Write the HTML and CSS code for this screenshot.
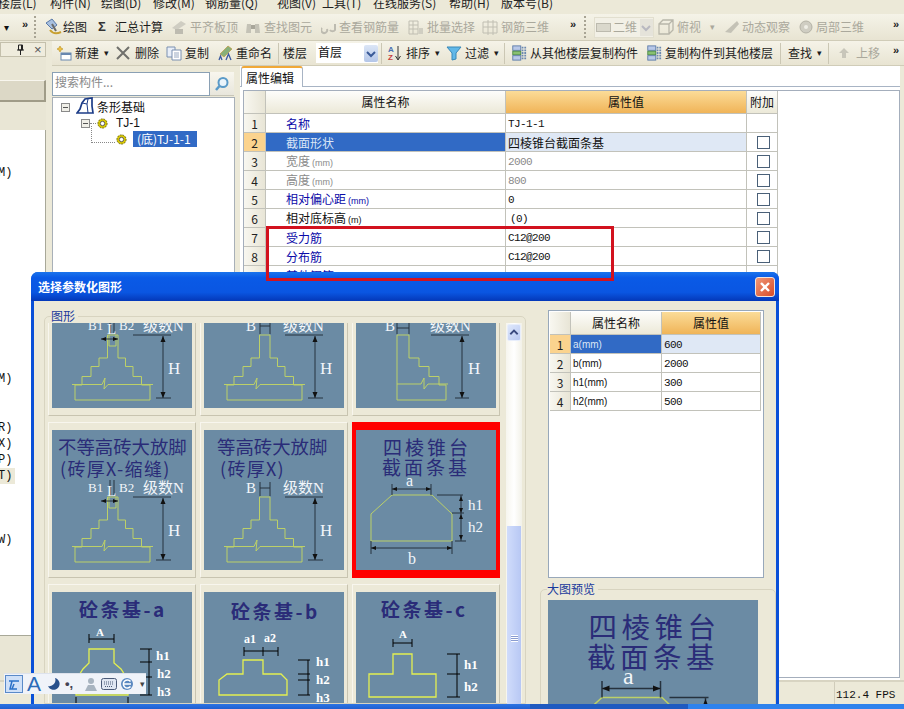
FILE: index.html
```html
<!DOCTYPE html>
<html lang="zh-CN">
<head>
<meta charset="utf-8">
<title>选择参数化图形</title>
<link rel="stylesheet" href="styles.css">
</head>
<body>
<svg class="defs" aria-hidden="true">
  <defs>
    <symbol id="gear" viewBox="0 0 12 12"><circle cx="6" cy="6" r="5" fill="#d8c800" stroke="#6a6200" stroke-dasharray="2 1"/><circle cx="6" cy="6" r="2.4" fill="#fff" stroke="#555"/></symbol>
    <symbol id="copyicon" viewBox="0 0 16 18"><rect x="1" y="1" width="9" height="5" fill="#b8c8e8" stroke="#5a7aa8"/><rect x="1" y="7" width="9" height="4" fill="#88c070" stroke="#4a8a48"/><rect x="1" y="12" width="9" height="5" fill="#b8c8e8" stroke="#5a7aa8"/><path d="M12 2v14M15 2v14" stroke="#6a88b0" stroke-width="2" stroke-dasharray="2 1"/></symbol>
    <symbol id="chev" viewBox="0 0 10 8"><path d="M1 2l4 4 4-4" fill="none" stroke="currentColor" stroke-width="2"/></symbol>
    <g id="steps">
      <path class="yl" d="M55.500 67V90H47V98.500H39V108.500H30V117H23V132H98V117H89.500V108.500H81V98.500H73.500V90H66V67Z"/>
      <path class="yl" d="M20 116.500H50L53 110L52 121L56 116.500H101"/>
    </g>
    <g id="dimH">
      <path class="dk" d="M81 67H119M104 130H119M111 68V130"/>
      <path class="ar" d="M111 68l-2.500 6h5zM111 130l-2.500-6h5z"/>
      <text class="wt" x="116" y="106" font-size="17">H</text>
    </g>
  </defs>
</svg>

<header class="menu">
  <span>楼层(L)</span><span>构件(N)</span><span>绘图(D)</span><span>修改(M)</span><span>钢筋量(Q)</span><span>视图(V)</span><span>工具(T)</span><span>在线服务(S)</span><span>帮助(H)</span><span>版本号(B)</span>
</header>

<div class="bar bar-top">
  <span class="caret">▾</span>
  <span class="more">»</span>
  <span class="grip"></span>
  <span class="tool close"><svg class="ic18" viewBox="0 0 18 18"><path d="M2 5l6-4 5 6-5 4z" fill="#a8c0e0" stroke="#5878a8"/><path d="M6 12c3 4 7 4 11 2" fill="none" stroke="#c8a030" stroke-width="2"/><path d="M8 6l4 7" stroke="#6a6a6a" stroke-width="2"/></svg>绘图</span>
  <span class="tool"><span class="sigma">Σ</span>汇总计算</span>
  <span class="tool off"><svg class="ic16" viewBox="0 0 16 16"><path d="M1 9l9-7 5 3-9 6z" fill="#cfcdc2"/><rect x="4" y="10" width="8" height="5" fill="#bdbbb0"/></svg>平齐板顶</span>
  <span class="tool off"><svg class="ic16" viewBox="0 0 16 16"><path d="M2 5h4v9H1zM10 5h4l1 9h-5z" fill="#c4c2b6"/><rect x="6" y="6" width="4" height="4" fill="#a8a69a"/></svg>查找图元</span>
  <span class="tool off"><svg class="ic16 narrow" viewBox="0 0 16 16"><path d="M1 9a3 3 0 1 0 5 1M9 11a3 3 0 0 0 5 0V5" fill="none" stroke="#bdbbb0" stroke-width="2"/></svg>查看钢筋量</span>
  <span class="tool off"><svg class="ic16" viewBox="0 0 16 16"><path d="M1 2h9v13H1zM1 6h9M1 10h9M5 2v13" fill="none" stroke="#c0beb2"/><path d="M11 9h4v6h-4z" fill="#d0cec2"/></svg>批量选择</span>
  <span class="tool off"><svg class="ic16" viewBox="0 0 16 16"><path d="M1 3h14v11H1zM6 1v15M11 1v15M1 8h14" fill="none" stroke="#c0beb2"/></svg>钢筋三维</span>
  <span class="more">»</span>
  <span class="grip"></span>
  <span class="combo off"><i class="swatch"></i>二维<i class="combo-btn"><svg class="chev"><use href="#chev"/></svg></i></span>
  <span class="tool off"><svg class="ic16" viewBox="0 0 16 16"><path d="M1 5h10v10H1zM1 5l4-4h10v10l-4 4M11 5l4-4" fill="none" stroke="#b8b6aa" stroke-width="1.300"/></svg>俯视<span class="caret-in far">▾</span></span>
  <span class="tool off tight"><svg class="ic16" viewBox="0 0 16 16"><path d="M1 13L13 2l2 3-8 9z" fill="#c4c2b6"/></svg>动态观察</span>
  <span class="tool off tight"><svg class="ic16" viewBox="0 0 16 16"><circle cx="8" cy="8" r="6" fill="#cfcdc2" stroke="#b4b2a6"/><circle cx="8" cy="8" r="2" fill="#efeee6"/></svg>局部三维</span>
  <span class="more">»</span>
</div>

<main class="main">
  <aside class="dock">
    <div class="dock-title"><svg class="pin" viewBox="0 0 9 11"><path d="M2.500 1h4v5h-4zM1 6h7M4.500 6v5M5.500 1v5" fill="none" stroke="#222"/></svg><span class="x">×</span></div>
    <div class="dock-a"></div>
    <div class="dock-b"></div>
    <div class="dock-c"></div>
    <div class="dock-list">
      <div class="li li-1">M)</div>
      <div class="li li-2">M)</div>
      <div class="li li-3">R)</div>
      <div class="li">X)</div>
      <div class="li">P)</div>
      <div class="li li-hl">T)</div>
      <div class="li li-4">W)</div>
    </div>
    <div class="dock-d"></div>
  </aside>

  <section class="work">
    <div class="bar bar-sub">
      <span class="tool"><svg class="ic16" viewBox="0 0 16 16"><path d="M4 1l1 2 2 1-2 1-1 2-1-2-2-1 2-1z" fill="#f0c040" stroke="#b89020" stroke-width=".6"/><rect x="5" y="8" width="10" height="7" fill="#fff" stroke="#6888b0"/><rect x="5" y="8" width="10" height="2" fill="#6888b0"/></svg>新建<span class="caret-in">▾</span></span>
      <span class="tool"><svg class="ic14" viewBox="0 0 14 14"><path d="M1 1l12 12M13 1L1 13" stroke="#70706c" stroke-width="2"/></svg>删除</span>
      <span class="tool"><svg class="ic16" viewBox="0 0 16 16"><path d="M1 2h8v10H1z" fill="#e8eef8" stroke="#7a90b0"/><path d="M6 5h9v10H6z" fill="#fff" stroke="#7a90b0"/><path d="M8 8h5M8 10h5M8 12h5" stroke="#98a8c0"/></svg>复制</span>
      <span class="tool"><svg class="ic16" viewBox="0 0 16 16"><path d="M3 9l8-8 4 3-8 8z" fill="#88b078" stroke="#c09030" stroke-width=".6"/><path d="M2 15l1.500-4 1.500 4M9 15l2.500-6 2.500 6" fill="none" stroke="#3a5aa0" stroke-width="1.300"/></svg>重命名</span>
      <span class="sep"></span>
      <span class="tool">楼层</span>
      <span class="select"><span>首层</span><i class="sel-btn"><svg class="chev"><use href="#chev"/></svg></i></span>
      <span class="sep"></span>
      <span class="tool"><svg class="ic16" viewBox="0 0 16 16"><text class="az a" x="1" y="7" font-size="8">A</text><text class="az z" x="1" y="15" font-size="8">Z</text><path d="M11 1v13M8.500 11l2.500 4 2.500-4" fill="none" stroke="#333"/></svg>排序<span class="caret-in">▾</span></span>
      <span class="tool"><svg class="ic16" viewBox="0 0 16 16"><path d="M1 2h14l-5 6v6l-4 1V8z" fill="#62b8e8" stroke="#3888b8"/></svg>过滤<span class="caret-in">▾</span></span>
      <span class="sep"></span>
      <span class="tool"><svg class="ic16"><use href="#copyicon"/></svg>从其他楼层复制构件</span>
      <span class="tool"><svg class="ic16"><use href="#copyicon"/></svg>复制构件到其他楼层</span>
      <span class="sep"></span>
      <span class="tool">查找<span class="caret-in">▾</span></span>
      <span class="sep"></span>
      <span class="tool off"><svg class="ic12" viewBox="0 0 12 12"><path d="M6 1l5 5H8v5H4V6H1z" fill="#c8c6ba"/></svg>上移</span>
      <span class="more">»</span>
    </div>

    <div class="panes">
      <div class="tree-pane">
        <div class="search">
          <span class="search-input">搜索构件...</span>
          <span class="search-btn"><svg class="ic16" viewBox="0 0 16 16"><circle cx="9" cy="6.500" r="4.500" fill="#eaf4fb" stroke="#5a9ac8" stroke-width="2"/><path d="M5.500 10L2 14" stroke="#5a9ac8" stroke-width="2.500"/></svg></span>
        </div>
        <div class="tree">
          <div class="node n0"><i class="box"></i><svg class="ic18 root" viewBox="0 0 18 18"><path d="M1 16l3-4 2-6 3-4 7-1v8l1 7z" fill="#fff" stroke="#1c3c88" stroke-width="1.700"/><path d="M6 6l5 1 1-5M11 7l1 9" fill="none" stroke="#1c3c88"/></svg><span>条形基础</span></div>
          <div class="node n1"><i class="box"></i><i class="dots"></i><svg class="gear"><use href="#gear"/></svg><span class="t1">TJ-1</span></div>
          <div class="node n2"><i class="elbow"></i><svg class="gear"><use href="#gear"/></svg><span class="sel">(底)TJ-1-1</span></div>
        </div>
      </div>

      <div class="prop-pane">
        <div class="tabs"><span class="tab">属性编辑</span></div>
        <div class="prop-frame">
          <table class="grid grid-main">
            <thead><tr><th class="idx"></th><th>属性名称</th><th class="hot">属性值</th><th>附加</th></tr></thead>
            <tbody>
              <tr><td class="idx">1</td><td class="name link">名称</td><td class="val">TJ-1-1</td><td></td></tr>
              <tr><td class="idx cur">2</td><td class="name picked">截面形状</td><td class="soft cjk">四棱锥台截面条基</td><td><i class="chk"></i></td></tr>
              <tr><td class="idx">3</td><td class="name mute">宽度<span class="unit">(mm)</span></td><td class="val mute">2000</td><td><i class="chk"></i></td></tr>
              <tr><td class="idx">4</td><td class="name mute">高度<span class="unit">(mm)</span></td><td class="val mute">800</td><td><i class="chk"></i></td></tr>
              <tr><td class="idx">5</td><td class="name link">相对偏心距<span class="unit">(mm)</span></td><td class="val">0</td><td><i class="chk"></i></td></tr>
              <tr><td class="idx">6</td><td class="name">相对底标高<span class="unit">(m)</span></td><td class="val ind">(0)</td><td><i class="chk"></i></td></tr>
              <tr><td class="idx">7</td><td class="name link">受力筋</td><td class="val">C12@200</td><td><i class="chk"></i></td></tr>
              <tr><td class="idx">8</td><td class="name link">分布筋</td><td class="val">C12@200</td><td><i class="chk"></i></td></tr>
              <tr><td class="idx">9</td><td class="name link">其他钢筋</td><td class="val"></td><td></td></tr>
            </tbody>
          </table>
        </div>
      </div>
    </div>
  </section>
</main>

<footer class="status"><span class="fps">112.4 FPS</span></footer>
<div class="taskbar"><span class="task-a"></span><span class="task-b"></span><span class="task-c"></span></div>

<div class="callout"></div>

<section class="dialog">
  <div class="dlg-title"><span>选择参数化图形</span><span class="dlg-close"><svg viewBox="0 0 12 12"><path d="M2 2l8 8M10 2l-8 8" stroke="#fff" stroke-width="2.400"/></svg></span></div>
  <div class="dlg-body">
    <div class="group shapes">
      <span class="legend">图形</span>
      <div class="gallery">
        <div class="thumbs">
          <div class="cell"><svg class="pic" viewBox="0 0 140 140"><use href="#steps"/><path class="yl" d="M57 78H64M57 78V67M64 78V67"/><use href="#dimH"/><path class="dk" d="M49 71H66M58 50V66M62 50V66"/><path class="ar" d="M49 71l5-2v4zM66 71l-5-2v4z"/><text class="wt" x="36" y="62" font-size="13">B1</text><text class="wl" x="55" y="66" font-size="15">L</text><text class="wt" x="67" y="62" font-size="13">B2</text><text class="wt cn" x="91" y="63" font-size="15">级数N</text></svg></div>
          <div class="cell"><svg class="pic" viewBox="0 0 140 140"><use href="#steps"/><use href="#dimH"/><path class="dk" d="M56 52V66M66 52V66M56 58H66"/><text class="wt" x="42" y="63" font-size="15">B</text><text class="wt cn" x="79" y="63" font-size="15">级数N</text></svg></div>
          <div class="cell"><svg class="pic" viewBox="0 0 140 140"><path class="yl" d="M41 67H53V90H63V98.500H73V108.500H83V117H90V132H41Z"/><path class="yl" d="M41 116H65L68 110L68 121L72 116H92"/><path class="dk" d="M75 67H113M99 130H113M106 68V130M41 60H53M41 55V66M53 55V66"/><path class="ar" d="M106 68l-2.500 6h5zM106 130l-2.500-6h5z"/><text class="wt" x="112" y="106" font-size="17">H</text><text class="wt" x="29" y="63" font-size="15">B</text><text class="wt cn" x="74" y="63" font-size="15">级数N</text></svg></div>

          <div class="cell"><svg class="pic" viewBox="0 0 140 140"><text class="nv" x="6" y="24" font-size="18.400">不等高砖大放脚</text><text class="nv" x="8" y="46" font-size="18" letter-spacing="1.300">(砖厚X-缩缝)</text><use href="#steps"/><path class="yl" d="M57 78H64M57 78V67M64 78V67"/><use href="#dimH"/><path class="dk" d="M49 71H66M58 50V66M62 50V66"/><path class="ar" d="M49 71l5-2v4zM66 71l-5-2v4z"/><text class="wt" x="36" y="62" font-size="13">B1</text><text class="wl" x="55" y="66" font-size="15">L</text><text class="wt" x="67" y="62" font-size="13">B2</text><text class="wt cn" x="91" y="63" font-size="15">级数N</text></svg></div>
          <div class="cell"><svg class="pic" viewBox="0 0 140 140"><text class="nv" x="13" y="24" font-size="18.400">等高砖大放脚</text><text class="nv" x="16" y="46" font-size="18" letter-spacing="1.300">(砖厚X)</text><use href="#steps"/><use href="#dimH"/><path class="dk" d="M56 52V66M66 52V66M56 58H66"/><text class="wt" x="42" y="63" font-size="15">B</text><text class="wt cn" x="79" y="63" font-size="15">级数N</text></svg></div>
          <div class="cell picked-cell"><svg class="pic" viewBox="0 0 140 140"><text class="nv" x="27" y="25" font-size="19" letter-spacing="3">四棱锥台</text><text class="nv" x="26" y="45" font-size="19" letter-spacing="3">截面条基</text><path class="yl" d="M36 65H76L96 84V111H15V84Z"/><path class="dk" d="M36 54V65M75 54V65M36 59H75M81 65H107M96 83H108M99 111H110M105 65V111M15 111V124M96 111V124M15 118H96"/><path class="ar" d="M36 59l5-2v4zM75 59l-5-2v4zM15 118l5-2v4zM96 118l-5-2v4zM105 66l-2 5h4zM105 83l-2-5h4zM105 84l-2 5h4zM105 110l-2-5h4z"/><text class="wt" x="50" y="56" font-size="16">a</text><text class="wt" x="52" y="134" font-size="16">b</text><text class="wt" x="112" y="80" font-size="15">h1</text><text class="wt" x="112" y="102" font-size="15">h2</text></svg></div>

          <div class="cell"><svg class="pic" viewBox="0 0 140 140"><text class="nvb" x="27" y="25" font-size="19" letter-spacing="2.500">砼条基-a</text><text class="wb" x="44" y="44" font-size="11">A</text><path class="bk" d="M37 42V51M62 42V51M37 47H62M88 57H100M88 70H100M88 85H100M88 103H100M97 57V103M24 105V112M76 105V112"/><path class="yb" d="M37 57H62V71L69 77L76 88V103H24V88L31 77L37 71Z"/><text class="wb" x="104" y="68" font-size="13">h1</text><text class="wb" x="105" y="86" font-size="13">h2</text><text class="wb" x="105" y="104" font-size="13">h3</text></svg></div>
          <div class="cell"><svg class="pic" viewBox="0 0 140 140"><text class="nvb" x="27" y="27" font-size="19" letter-spacing="2.500">砼条基-b</text><text class="wb" x="40" y="51" font-size="12">a1</text><text class="wb" x="60" y="50" font-size="12">a2</text><path class="bk" d="M40 55V64M59 55V64M74 55V64M40 59H74M94 68H106M94 82H106M94 88H106M94 103H106M104 68V103"/><path class="yb" d="M39 68H59V82H77L83 88V103H15V88L23 82H39Z"/><text class="wb" x="112" y="74" font-size="13">h1</text><text class="wb" x="112" y="92" font-size="13">h2</text><text class="wb" x="112" y="110" font-size="13">h3</text></svg></div>
          <div class="cell"><svg class="pic" viewBox="0 0 140 140"><text class="nvb" x="25" y="25" font-size="19" letter-spacing="2.500">砼条基-c</text><text class="wb" x="43" y="46" font-size="11">A</text><path class="bk" d="M37 47V55M56 47V55M37 51H56M91 62H104M91 82H104M91 105H104M101 62V105"/><path class="yb" d="M37 62H56V82H80V105H13V82H37Z"/><text class="wb" x="108" y="77" font-size="13">h1</text><text class="wb" x="108" y="99" font-size="13">h2</text></svg></div>
        </div>
      </div>
      <div class="scroll">
        <span class="sb-up"><svg viewBox="0 0 13 16"><path d="M2.500 10l4-4 4 4" fill="none" stroke="#3a4a80" stroke-width="2"/></svg></span>
        <span class="sb-thumb"><i class="sb-grip"></i></span>
      </div>
    </div>

    <div class="side">
      <div class="mini-frame">
        <table class="grid grid-mini">
          <thead><tr><th class="idx"></th><th>属性名称</th><th class="hot">属性值</th></tr></thead>
          <tbody>
            <tr><td class="idx cur">1</td><td class="tight-name picked">a(mm)</td><td class="val soft">600</td></tr>
            <tr><td class="idx">2</td><td class="tight-name">b(mm)</td><td class="val">2000</td></tr>
            <tr><td class="idx">3</td><td class="tight-name">h1(mm)</td><td class="val">300</td></tr>
            <tr><td class="idx">4</td><td class="tight-name">h2(mm)</td><td class="val">500</td></tr>
          </tbody>
        </table>
      </div>
      <div class="group preview">
        <span class="legend">大图预览</span>
        <svg class="bigpic" viewBox="0 0 140 140"><text class="nv" x="27" y="25" font-size="19" letter-spacing="3">四棱锥台</text><text class="nv" x="26" y="45" font-size="19" letter-spacing="3">截面条基</text><path class="yl" d="M36 65H76L96 84V111H15V84Z"/><path class="dk" d="M36 54V65M75 54V65M36 59H75M81 65H107M96 83H108M99 111H110M105 65V111M15 111V124M96 111V124M15 118H96"/><path class="ar" d="M36 59l5-2v4zM75 59l-5-2v4zM105 66l-2 5h4z"/><text class="wt" x="50" y="56" font-size="16">a</text><text class="wt" x="112" y="80" font-size="15">h1</text></svg>
      </div>
    </div>
  </div>
</section>

<div class="ime">
  <span class="ime-wb"><svg viewBox="0 0 14 12"><path d="M2 2h10M5 2L3 10h7M7 5L5 10" fill="none" stroke="#2a70c8" stroke-width="1.500"/></svg></span>
  <span class="ime-a">A</span>
  <svg class="ime-i" viewBox="0 0 14 14"><path d="M8 1a6 6 0 1 1-7 8a6 6 0 0 0 7-8z" fill="#28508c"/></svg>
  <span class="ime-p">•,</span>
  <svg class="ime-i" viewBox="0 0 14 14"><circle cx="7" cy="4" r="3" fill="#a8b4c0"/><path d="M1 14l3-6h6l3 6z" fill="#a8b4c0"/></svg>
  <svg class="ime-i ime-kb" viewBox="0 0 16 14"><rect x=".5" y="1.500" width="15" height="11" rx="2" fill="#dfe6f2" stroke="#4a5a78"/><path d="M3 5h10M3 7h10M4 9.500h8" stroke="#4a5a78" stroke-dasharray="1 1"/></svg>
  <svg class="ime-i" viewBox="0 0 14 14"><circle cx="7" cy="7" r="6" fill="#5a88c0"/><path d="M3 7h8M10.500 9.500A4 4 0 1 1 10.500 4.500" fill="none" stroke="#fff" stroke-width="1.500"/></svg>
  <span class="ime-c">▾</span>
</div>
</body>
</html>
```

FILE: styles.css
```css
* { box-sizing: border-box; }
html, body { margin: 0; padding: 0; }
body {
  position: relative;
  width: 904px;
  height: 709px;
  overflow: hidden;
  display: flex;
  flex-direction: column;
  background: #ece9d8;
  color: #111;
  font: 12px/16px "Noto Sans CJK SC", "Liberation Sans", sans-serif;
}
i { display: block; font-style: normal; }
.defs { position: absolute; width: 0; height: 0; }

/* menu */
.menu {
  flex: none;
  height: 14px;
  overflow: hidden;
  display: grid;
  grid-template-columns: 52px 51px 52px 52px 72px 45px 51px 76px 52px auto;
  margin-left: -2px;
  background: #ece9d8;
  color: #222;
}
.menu span { margin-top: -5px; white-space: nowrap; }

/* toolbars */
.bar {
  display: grid;
  align-items: center;
  white-space: nowrap;
  background: linear-gradient(#f5f3e8, #e8e4d2);
}
.bar-top {
  flex: none;
  height: 27px;
  border-bottom: 1px solid #d0ccb8;
  grid-template-columns: 22px 12px 10px 54px 73px 74px 76px 87px 74px 88px 14px 10px 64px 66px 74px 95px 11px;
}
.bar-sub {
  flex: none;
  height: 25px;
  padding-left: 4px;
  border-bottom: 1px solid #d0ccb8;
  grid-template-columns: 60px 50px 51px 61px 5px 33px 65px 6px 59px 58px 7px 135px 134px 8px 40px 10px 55px 11px;
}
.tool { display: flex; align-items: center; gap: 3px; color: #1c1c1c; }
.tool.tight { gap: 2px; }
.tool.close { gap: 1px; }
.off { color: #aaa89c; }
.off.tool { color: #aaa89c; }
.caret { padding-left: 4px; font-size: 10px; }
.caret-in { margin-left: 2px; font-size: 9px; }
.caret-in.far { margin-left: 6px; }
.more { font: bold 11px/12px "Liberation Sans", sans-serif; margin-top: -7px; color: #222; }
.grip { width: 2px; height: 22px; border-left: 2px dotted #a8a494; }
.sep { width: 1px; height: 21px; background: #cbc7b4; }
.sigma { width: 14px; font: bold 13px/16px "Liberation Sans", sans-serif; color: #333; }
.ic18 { flex: none; width: 18px; height: 18px; }
.ic16 { flex: none; width: 16px; height: 16px; }
.ic14 { flex: none; width: 14px; height: 14px; margin-right: 2px; }
.ic12 { flex: none; width: 12px; height: 12px; margin-right: 3px; }
.narrow { margin-right: -1px; }
.chev { display: block; width: 10px; height: 8px; }
.combo {
  display: flex;
  align-items: center;
  width: 60px;
  height: 21px;
  padding-left: 1px;
  background: #f2f0e6;
  border: 1px solid #e2dfcf;
}
.swatch { width: 15px; height: 9px; margin-right: 2px; background: #dad8cc; border: 1px solid #bcbaae; }
.combo-btn { margin-left: auto; width: 13px; height: 17px; padding: 5px 1px; background: #e5e3da; color: #b8b8c0; }
.select {
  display: flex;
  align-items: center;
  width: 62px;
  height: 20px;
  padding-left: 2px;
  background: #fff;
}
.select span { margin-top: -3px; }
.sel-btn {
  margin-left: auto;
  width: 14px;
  height: 17px;
  padding: 5px 2px;
  background: linear-gradient(#dce6f6, #b4c6e8);
  border-radius: 2px;
  color: #3a5a98;
}
.az { font-family: "Liberation Sans", sans-serif; font-weight: bold; }
.az.a { fill: #4a70b0; }
.az.z { fill: #c84040; }

/* main */
.main { flex: 1; min-height: 0; display: flex; }
.dock { flex: none; width: 46px; margin-right: 6px; display: flex; flex-direction: column; margin-top: 1px; }
.dock-title {
  flex: none;
  height: 15px;
  display: flex;
  align-items: center;
  padding-left: 15px;
  gap: 9px;
  background: #efecdd;
  border: 1px solid #c4c0ac;
  color: #333;
}
.pin { flex: none; width: 9px; height: 11px; }
.x { font: 13px/12px "Liberation Sans", sans-serif; color: #555; }
.dock-a { flex: none; height: 23px; background: #e9e6d5; }
.dock-b { flex: none; height: 22px; background: #dcd8c6; border-top: 1px solid #f8f6ee; border-bottom: 2px solid #a09c88; border-right: 2px solid #a09c88; }
.dock-c { flex: none; height: 28px; background: #e9e6d5; }
.dock-list { flex: none; height: 505px; background: #fff; border-right: 1px solid #a8a898; overflow: hidden; }
.li { height: 16px; margin-left: -2px; font: 12px/16px "Liberation Mono", monospace; }
.li-1 { margin-top: 35px; }
.li-2 { margin-top: 190px; }
.li-3 { margin-top: 33px; }
.li-4 { margin-top: 48px; }
.li-hl { width: 17px; background: #ece9d8; }
.dock-d { flex: 1; background: #e9e6d5; border-top: 1px solid #a8a898; }

.work { flex: 1; min-width: 0; display: flex; flex-direction: column; }
.panes { flex: 1; min-height: 0; display: flex; }

/* tree */
.tree-pane { flex: none; width: 183px; margin-right: 5px; padding-top: 6px; display: flex; flex-direction: column; }
.search { flex: none; display: flex; height: 24px; }
.search-input {
  width: 158px;
  padding: 1px 2px;
  background: #fff;
  border: 1px solid #8aa0b4;
  color: #8a8a8a;
}
.search-btn {
  width: 24px;
  display: flex;
  align-items: center;
  justify-content: center;
  background: linear-gradient(#f8f6ee, #e8e6dc);
  border-bottom: 1px solid #c8c6b8;
}
.tree { flex: 1; margin-top: 1px; padding-top: 1px; background: #fff; border: 1px solid #a8b0b8; }
.node { display: flex; align-items: center; height: 16px; }
.n0 { padding-left: 8px; }
.n1 { padding-left: 28px; }
.n2 { padding-left: 38px; }
.box {
  width: 9px;
  height: 9px;
  border: 1px solid #8a8a8a;
  background: linear-gradient(90deg, transparent 1px, #555 1px, #555 6px, transparent 6px) center / 100% 1px no-repeat, #f0efe8;
}
.root { margin: -2px 3px 0 6px; }
.dots { width: 6px; border-top: 1px dotted #888; }
.gear { width: 11px; height: 11px; margin: 0 8px 0 1px; }
.t1 { font: 12px/16px "Liberation Sans", sans-serif; }
.elbow { width: 24px; height: 17px; margin-top: -10px; border-left: 1px dotted #888; border-bottom: 1px dotted #888; }
.n2 .gear { margin: 0 6px 0 1px; }
.sel { width: 64px; height: 16px; padding-left: 4px; background: #316ac5; color: #fff; white-space: nowrap; }

/* property pane */
.prop-pane { flex: none; width: 660px; display: flex; flex-direction: column; background: #fff; }
.tabs { flex: none; height: 21px; padding-left: 1px; border-bottom: 1px solid #a8b4c4; }
.tab {
  display: block;
  width: 62px;
  height: 21px;
  padding: 2px 0 0 4px;
  background: #fff;
  border: 1px solid #a8b4c4;
  border-bottom: 0;
  border-top: 2px solid #f0a838;
  border-radius: 3px 3px 0 0;
}
.prop-frame { flex: 1; margin: 3px 0 2px 3px; border: 1px solid #a4aebc; background: #fff; }

.grid { border-collapse: separate; border-spacing: 0; table-layout: fixed; background: #fff; }
.grid th, .grid td { padding: 0; border-right: 1px solid #c2c2ba; border-bottom: 1px solid #c2c2ba; height: 19px; overflow: hidden; white-space: nowrap; font-weight: normal; }
.grid td { padding-top: 1px; }
.grid th { height: 23px; background: linear-gradient(#fdfdfb, #ece9d8); text-align: center; }
.grid th.hot { background: linear-gradient(#fbdc98, #f0b458); }
.grid td.idx, .grid th.idx { background: linear-gradient(90deg, #f8f7f0, #e8e5d6); text-align: center; color: #222; }
.grid td.cur { background: #fbd38e; }
.grid-main { width: 534px; }
.grid-main .idx { width: 22px; }
.grid-main th:nth-child(2) { width: 240px; }
.grid-main th:nth-child(3) { width: 241px; }
.grid-main td:nth-child(4) { background: #fff; }
.grid-main td:nth-child(4), .grid-main th:nth-child(4) { width: 31px; }
.grid td.name { padding-left: 20px; }
.unit { margin-left: 2px; font: 9px/14px "Liberation Sans", sans-serif; }
.link { color: #0a0aa8; }
.mute { color: #8a8a8a; }
.grid td.picked { background: #316ac5; color: #dbe6f6; }
.soft { background: #dfe8f5; }
.grid td.val, .grid td.cjk { padding-left: 2px; }
.val { font: 11px/14px "Liberation Mono", monospace; letter-spacing: -.6px; }
.grid td.ind { padding-left: 4px; }
.chk { width: 13px; height: 13px; margin-left: 10px; background: #fff; border: 1px solid #4a6078; }

/* callout */
.callout {
  position: absolute;
  left: 266px;
  top: 226px;
  width: 348px;
  height: 55px;
  border: 3px solid #d2121e;
  z-index: 3;
}

/* status */
.status { flex: none; height: 24px; display: flex; justify-content: flex-end; background: #ece9d8; border-top: 2px solid #d8d4c2; }
.fps { width: 70px; padding: 5px 0 0 1px; border-left: 1px solid #d0ccba; font: 11px/16px "Liberation Mono", monospace; white-space: nowrap; }
.taskbar { flex: none; height: 5px; display: flex; background: linear-gradient(#2c74e4, #1f5fd0); }
.task-a { width: 530px; }
.task-b { width: 158px; background: #1f5ac0; }
.task-c { flex: 1; background: #2e82ec; }

/* dialog */
.dialog {
  position: absolute;
  left: 31px;
  top: 272px;
  width: 748px;
  height: 432px;
  display: flex;
  flex-direction: column;
  overflow: hidden;
  border-radius: 7px 7px 0 0;
  background: #0a50d8;
  z-index: 2;
}
.dlg-title {
  flex: none;
  height: 29px;
  display: flex;
  align-items: center;
  justify-content: space-between;
  padding: 0 4px 0 7px;
  background: linear-gradient(#1a74ec 0, #0a5ae6 20%, #0a56e2 70%, #0438b8 100%);
  color: #fff;
  font-weight: bold;
}
.dlg-close {
  width: 20px;
  height: 20px;
  padding: 3px;
  background: linear-gradient(135deg, #f09878, #d84c28);
  border: 1px solid #f2e4dc;
  border-radius: 3px;
}
.dlg-close svg { display: block; }
.dlg-body {
  flex: 1;
  min-height: 0;
  margin: 0 3px;
  padding: 15px 0 0 10px;
  display: flex;
  gap: 14px;
  background: #ece9d8;
}
.group { position: relative; border: 1px solid #d8d4c0; border-radius: 5px 5px 0 0; }
.legend { position: absolute; left: 6px; top: -8px; height: 14px; padding-right: 3px; background: #ece9d8; color: #1a3a9c; line-height: 14px; }
.shapes { flex: none; width: 482px; padding: 6px 3px 0; display: flex; gap: 1px; }
.gallery { width: 457px; overflow: hidden; }
.thumbs { display: grid; grid-template-columns: repeat(3, 148px); grid-auto-rows: 156px; gap: 6px 4px; margin-top: -63px; }
.cell {
  padding: 8px 4px;
  background: #ece9d8;
  border-top: 1px solid #f8f6ee;
  border-left: 1px solid #f8f6ee;
  border-right: 1px solid #c8c4b0;
  border-bottom: 1px solid #c8c4b0;
}
.cell .pic { margin: -1px 0 0 -1px; }
.picked-cell { background: #f00; border-color: #f00; }
.pic { display: block; width: 140px; height: 140px; background: #6b8ba4; }
.bigpic { display: block; width: 210px; height: 210px; margin: 10px 0 0 7px; background: #6b8ba4; }
.yl { fill: none; stroke: #bcd068; stroke-width: 1; }
.yb { fill: none; stroke: #e4f050; stroke-width: 1.300; }
.dk { fill: none; stroke: #26323e; stroke-width: 1; }
.bk { fill: none; stroke: #000; stroke-width: 1; }
.ar { fill: #111; }
.wt { fill: #f2f6fa; font-family: "Liberation Serif", "Noto Sans CJK SC", serif; }
.wl { fill: #f2f6fa; font-family: "Liberation Serif", serif; }
.wt.cn { font-family: "Liberation Serif", "Noto Sans CJK SC", serif; }
.wb { fill: #fff; font-family: "Liberation Serif", serif; font-weight: bold; }
.nv { fill: #2a2c78; font-family: "Noto Sans CJK SC", serif; }
.nvb { fill: #2a2c78; font-family: "Noto Sans CJK SC", serif; font-weight: bold; }

.scroll { flex: none; width: 16px; display: flex; flex-direction: column; align-items: center; background: linear-gradient(90deg, #f6f5ee, #fff 50%, #f2f1e8); }
.sb-up { flex: none; width: 14px; height: 17px; margin-top: 1px; background: linear-gradient(135deg, #dfe8fb, #b8c8f2); border: 1px solid #e8eefb; border-radius: 2px; }
.sb-up svg { display: block; }
.sb-thumb { flex: none; width: 14px; height: 200px; margin-top: 185px; background: linear-gradient(90deg, #d0dcfb, #b8c8f4); display: flex; align-items: center; justify-content: center; padding-top: 24px; }
.sb-grip { width: 7px; height: 7px; background: repeating-linear-gradient(#fff 0, #fff 1px, #8a9cd0 1px, #8a9cd0 2px); }

.side { flex: none; width: 236px; margin-top: -6px; display: flex; flex-direction: column; }
.mini-frame { flex: none; width: 216px; height: 268px; margin-left: 8px; padding: 1px; background: #fff; border: 1px solid #98a8ba; }
.grid-mini { width: 211px; }
.grid-mini .idx { width: 21px; }
.grid-mini th:nth-child(2) { width: 91px; }
.grid-mini th:nth-child(3) { width: 99px; }
.grid td.tight-name { padding-left: 2px; font: 10px/14px "Liberation Sans", sans-serif; }
.preview { flex: 1; margin-top: 11px; border-radius: 5px 5px 0 0; }

/* ime */
.ime {
  position: absolute;
  left: 4px;
  top: 673px;
  width: 142px;
  height: 21px;
  display: grid;
  grid-template-columns: 22px 20px 18px 19px 17px 19px 20px auto;
  align-items: center;
  padding-left: 1px;
  background: #f0f3f9;
  border-top: 1px solid #dde2ec;
  z-index: 4;
}
.ime-wb { width: 18px; height: 18px; padding: 3px 1px; background: #cfe0f8; border: 1px solid #5a8ac8; }
.ime-wb svg { display: block; }
.ime-a { font: 21px/20px "Liberation Sans", sans-serif; color: #2a6ab8; }
.ime-i { width: 14px; height: 14px; }
.ime-kb { width: 16px; }
.ime-p { font: bold 13px/14px "Liberation Sans", sans-serif; color: #445; }
.ime-c { font-size: 9px; color: #444; }
```
